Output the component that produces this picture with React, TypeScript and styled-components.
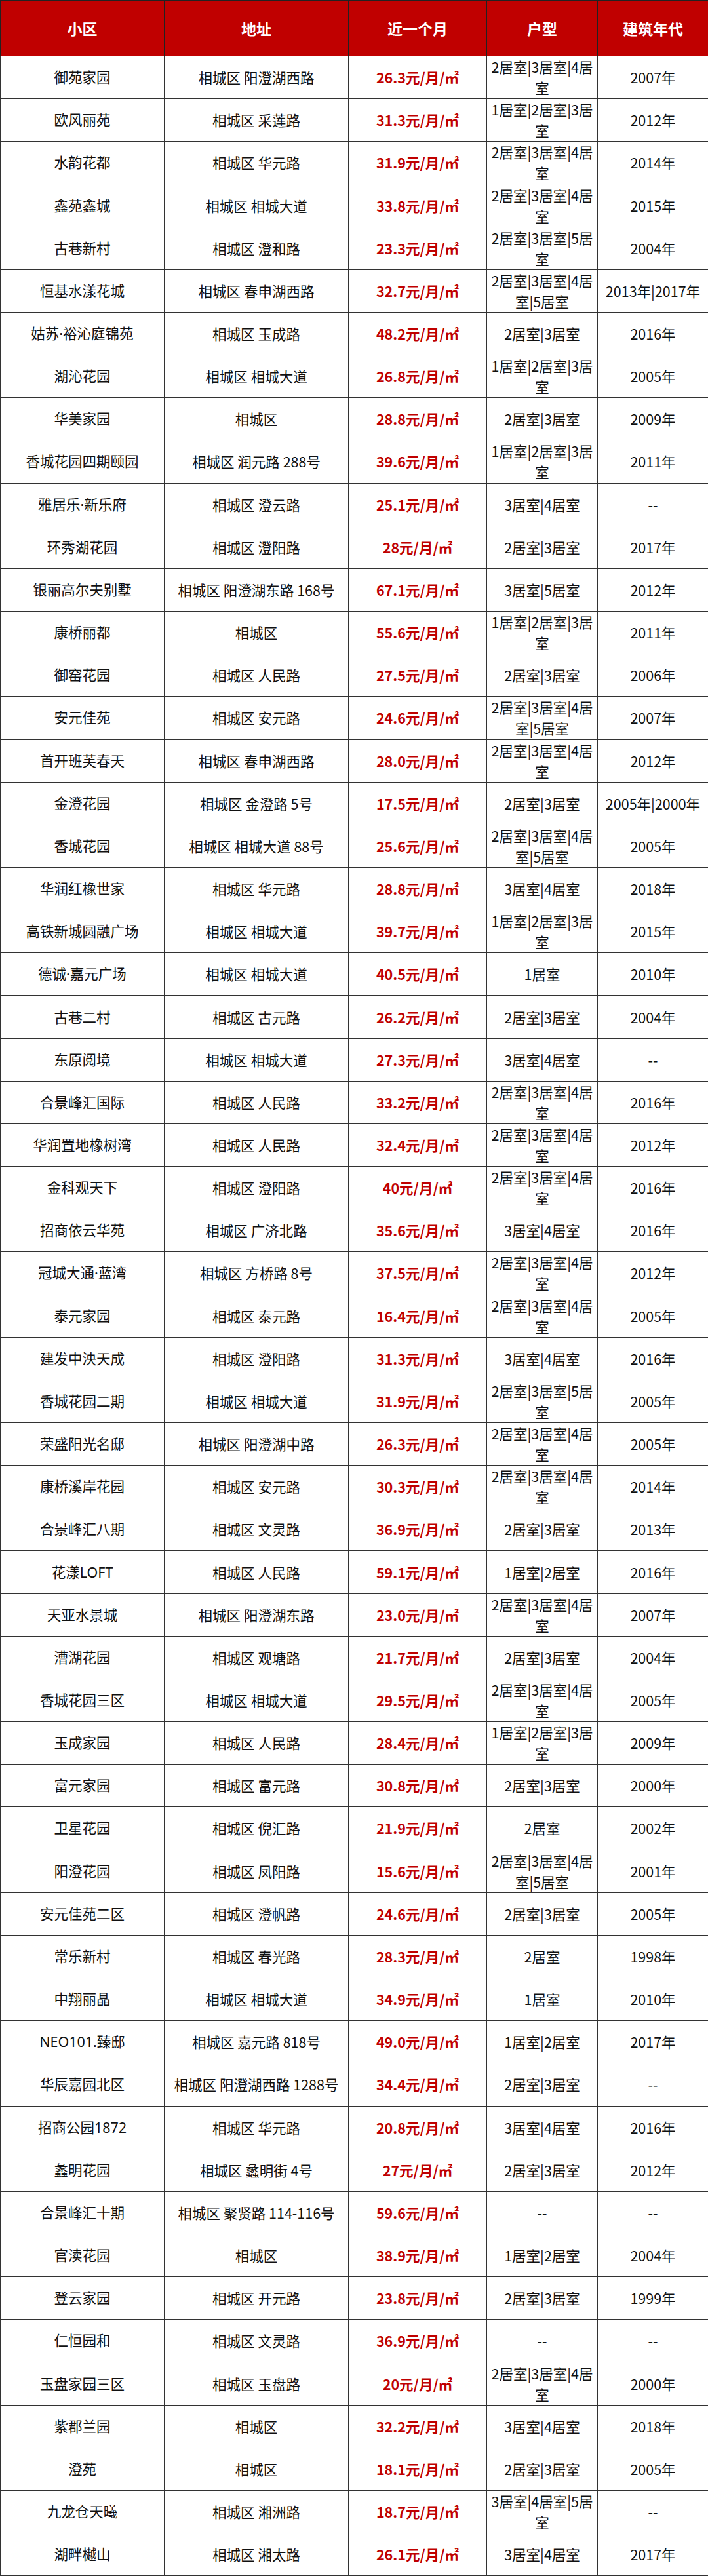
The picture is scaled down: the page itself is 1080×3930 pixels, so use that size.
import React from "react";
import styled, { createGlobalStyle } from "styled-components";

const GlobalStyle = createGlobalStyle`
  html, body {
    margin: 0;
    padding: 0;
    background: #ffffff;
  }
  body {
    font-family: "Noto Sans CJK SC", "Noto Sans", sans-serif;
  }
`;

type Row = [string, string, string, string, string];

const rows: Row[] = [
  ["御苑家园", "相城区 阳澄湖西路", "26.3", "2居室|3居室|4居室", "2007年"],
  ["欧风丽苑", "相城区 采莲路", "31.3", "1居室|2居室|3居室", "2012年"],
  ["水韵花都", "相城区 华元路", "31.9", "2居室|3居室|4居室", "2014年"],
  ["鑫苑鑫城", "相城区 相城大道", "33.8", "2居室|3居室|4居室", "2015年"],
  ["古巷新村", "相城区 澄和路", "23.3", "2居室|3居室|5居室", "2004年"],
  ["恒基水漾花城", "相城区 春申湖西路", "32.7", "2居室|3居室|4居室|5居室", "2013年|2017年"],
  ["姑苏·裕沁庭锦苑", "相城区 玉成路", "48.2", "2居室|3居室", "2016年"],
  ["湖沁花园", "相城区 相城大道", "26.8", "1居室|2居室|3居室", "2005年"],
  ["华美家园", "相城区", "28.8", "2居室|3居室", "2009年"],
  ["香城花园四期颐园", "相城区 润元路 288号", "39.6", "1居室|2居室|3居室", "2011年"],
  ["雅居乐·新乐府", "相城区 澄云路", "25.1", "3居室|4居室", "--"],
  ["环秀湖花园", "相城区 澄阳路", "28", "2居室|3居室", "2017年"],
  ["银丽高尔夫别墅", "相城区 阳澄湖东路 168号", "67.1", "3居室|5居室", "2012年"],
  ["康桥丽都", "相城区", "55.6", "1居室|2居室|3居室", "2011年"],
  ["御窑花园", "相城区 人民路", "27.5", "2居室|3居室", "2006年"],
  ["安元佳苑", "相城区 安元路", "24.6", "2居室|3居室|4居室|5居室", "2007年"],
  ["首开班芙春天", "相城区 春申湖西路", "28.0", "2居室|3居室|4居室", "2012年"],
  ["金澄花园", "相城区 金澄路 5号", "17.5", "2居室|3居室", "2005年|2000年"],
  ["香城花园", "相城区 相城大道 88号", "25.6", "2居室|3居室|4居室|5居室", "2005年"],
  ["华润红橡世家", "相城区 华元路", "28.8", "3居室|4居室", "2018年"],
  ["高铁新城圆融广场", "相城区 相城大道", "39.7", "1居室|2居室|3居室", "2015年"],
  ["德诚·嘉元广场", "相城区 相城大道", "40.5", "1居室", "2010年"],
  ["古巷二村", "相城区 古元路", "26.2", "2居室|3居室", "2004年"],
  ["东原阅境", "相城区 相城大道", "27.3", "3居室|4居室", "--"],
  ["合景峰汇国际", "相城区 人民路", "33.2", "2居室|3居室|4居室", "2016年"],
  ["华润置地橡树湾", "相城区 人民路", "32.4", "2居室|3居室|4居室", "2012年"],
  ["金科观天下", "相城区 澄阳路", "40", "2居室|3居室|4居室", "2016年"],
  ["招商依云华苑", "相城区 广济北路", "35.6", "3居室|4居室", "2016年"],
  ["冠城大通·蓝湾", "相城区 方桥路 8号", "37.5", "2居室|3居室|4居室", "2012年"],
  ["泰元家园", "相城区 泰元路", "16.4", "2居室|3居室|4居室", "2005年"],
  ["建发中泱天成", "相城区 澄阳路", "31.3", "3居室|4居室", "2016年"],
  ["香城花园二期", "相城区 相城大道", "31.9", "2居室|3居室|5居室", "2005年"],
  ["荣盛阳光名邸", "相城区 阳澄湖中路", "26.3", "2居室|3居室|4居室", "2005年"],
  ["康桥溪岸花园", "相城区 安元路", "30.3", "2居室|3居室|4居室", "2014年"],
  ["合景峰汇八期", "相城区 文灵路", "36.9", "2居室|3居室", "2013年"],
  ["花漾LOFT", "相城区 人民路", "59.1", "1居室|2居室", "2016年"],
  ["天亚水景城", "相城区 阳澄湖东路", "23.0", "2居室|3居室|4居室", "2007年"],
  ["漕湖花园", "相城区 观塘路", "21.7", "2居室|3居室", "2004年"],
  ["香城花园三区", "相城区 相城大道", "29.5", "2居室|3居室|4居室", "2005年"],
  ["玉成家园", "相城区 人民路", "28.4", "1居室|2居室|3居室", "2009年"],
  ["富元家园", "相城区 富元路", "30.8", "2居室|3居室", "2000年"],
  ["卫星花园", "相城区 倪汇路", "21.9", "2居室", "2002年"],
  ["阳澄花园", "相城区 凤阳路", "15.6", "2居室|3居室|4居室|5居室", "2001年"],
  ["安元佳苑二区", "相城区 澄帆路", "24.6", "2居室|3居室", "2005年"],
  ["常乐新村", "相城区 春光路", "28.3", "2居室", "1998年"],
  ["中翔丽晶", "相城区 相城大道", "34.9", "1居室", "2010年"],
  ["NEO101.臻邸", "相城区 嘉元路 818号", "49.0", "1居室|2居室", "2017年"],
  ["华辰嘉园北区", "相城区 阳澄湖西路 1288号", "34.4", "2居室|3居室", "--"],
  ["招商公园1872", "相城区 华元路", "20.8", "3居室|4居室", "2016年"],
  ["蠡明花园", "相城区 蠡明街 4号", "27", "2居室|3居室", "2012年"],
  ["合景峰汇十期", "相城区 聚贤路 114-116号", "59.6", "--", "--"],
  ["官渎花园", "相城区", "38.9", "1居室|2居室", "2004年"],
  ["登云家园", "相城区 开元路", "23.8", "2居室|3居室", "1999年"],
  ["仁恒园和", "相城区 文灵路", "36.9", "--", "--"],
  ["玉盘家园三区", "相城区 玉盘路", "20", "2居室|3居室|4居室", "2000年"],
  ["紫郡兰园", "相城区", "32.2", "3居室|4居室", "2018年"],
  ["澄苑", "相城区", "18.1", "2居室|3居室", "2005年"],
  ["九龙仓天曦", "相城区 湘洲路", "18.7", "3居室|4居室|5居室", "--"],
  ["湖畔樾山", "相城区 湘太路", "26.1", "3居室|4居室", "2017年"],
];

const columns = [
  { title: "小区", width: 250 },
  { title: "地址", width: 281 },
  { title: "近一个月", width: 211 },
  { title: "户型", width: 169 },
  { title: "建筑年代", width: 169 },
];

const Table = styled.table`
  width: 1080px;
  table-layout: fixed;
  border-collapse: collapse;
  border: 1px solid #222;
`;

const HeadRow = styled.tr`
  height: 85px;
  background: #c00000;
`;

const HeadCell = styled.th`
  border: 1px solid #222;
  color: #ffffff;
  font-size: 23px;
  font-weight: 700;
  text-align: center;
  vertical-align: middle;
  padding: 0;
`;

const BodyRow = styled.tr`
  height: 65.17px;
  background: #ffffff;
`;

const Cell = styled.td<{ $price?: boolean }>`
  border: 1px solid #333;
  padding: 0 4px;
  text-align: center;
  vertical-align: middle;
  font-size: 21.5px;
  line-height: 32px;
  color: ${(p) => (p.$price ? "#c00000" : "#111111")};
  font-weight: ${(p) => (p.$price ? 700 : 400)};
`;

/* Name column: Latin glyphs (narrow middle dot, digits) from Noto Sans */
const NameCell = styled(Cell)`
  font-family: "Noto Sans", "Noto Sans CJK SC", sans-serif;
`;

export default function App() {
  return (
    <>
      <GlobalStyle />
      <Table>
        <colgroup>
          {columns.map((c) => (
            <col key={c.title} style={{ width: c.width }} />
          ))}
        </colgroup>
        <thead>
          <HeadRow>
            {columns.map((c) => (
              <HeadCell key={c.title}>{c.title}</HeadCell>
            ))}
          </HeadRow>
        </thead>
        <tbody>
          {rows.map((r, i) => (
            <BodyRow key={i}>
              <NameCell>{r[0]}</NameCell>
              <Cell>{r[1]}</Cell>
              <Cell $price>{r[2]}元/月/㎡</Cell>
              <Cell>{r[3]}</Cell>
              <Cell>{r[4]}</Cell>
            </BodyRow>
          ))}
        </tbody>
      </Table>
    </>
  );
}
